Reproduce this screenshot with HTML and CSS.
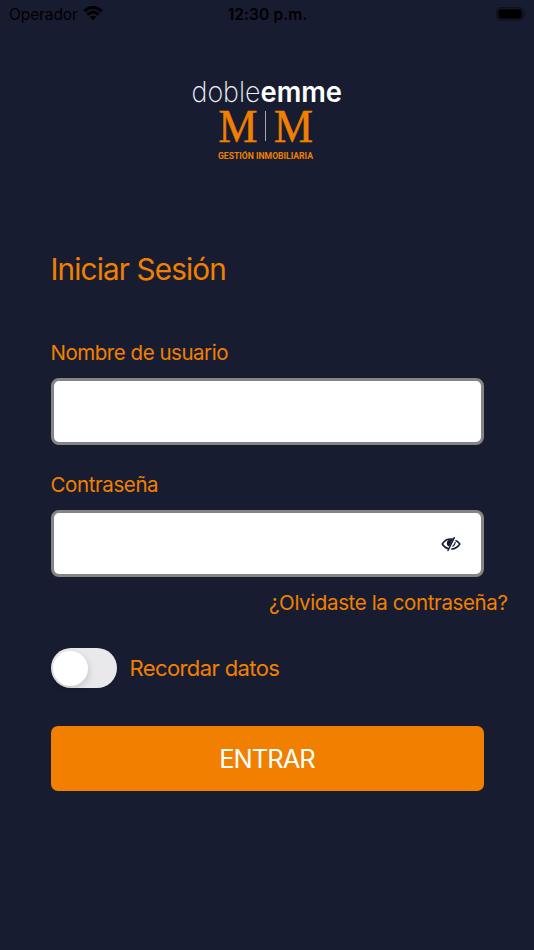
FILE: index.html
```html
<!DOCTYPE html>
<html lang="es">
<head>
<meta charset="utf-8">
<title>Iniciar Sesión</title>
<link rel="stylesheet" href="styles.css">
</head>
<body>
<header class="status">
  <div class="carrier"><span>Operador</span>
    <svg width="20" height="15" viewBox="0 0 20 15" fill="none" stroke="#000" stroke-width="3.2"><path d="M1.2 5.2Q10-2.4 18.8 5.2M4.3 8.6Q10 3.8 15.7 8.6"/><path d="M10 14.3 6.7 11Q10 8.4 13.3 11Z" fill="#000" stroke="none"/></svg>
  </div>
  <span class="time">12:30 p.m.</span>
  <svg class="battery" width="31" height="14" viewBox="0 0 31 14"><rect x=".7" y=".7" width="26.6" height="12.6" rx="4" fill="none" stroke="#0e111f" stroke-width="1.4"/><rect x="2.3" y="2.3" width="23.4" height="9.4" rx="2.3"/><path d="M28.6 4.8q2.5 2.2 0 4.5z" fill="#0e111f"/></svg>
</header>
<svg class="logo" width="150" height="84" viewBox="0 0 150 84">
  <text class="thin" x="-.5" y="23.5" textLength="69" lengthAdjust="spacingAndGlyphs">doble</text>
  <text class="heavy" x="68.5" y="23.5" textLength="81.5" lengthAdjust="spacingAndGlyphs">emme</text>
  <text class="mm" x="26.5" y="63.5" textLength="39" lengthAdjust="spacingAndGlyphs">M</text>
  <path d="M73.5 33v30" stroke="#a6a8b2" stroke-width="1"/>
  <text class="mm" x="82" y="63.5" textLength="39" lengthAdjust="spacingAndGlyphs">M</text>
  <text class="tagline" x="26" y="81" textLength="95" lengthAdjust="spacingAndGlyphs">GESTIÓN INMOBILIARIA</text>
</svg>
<main>
  <h1>Iniciar Sesión</h1>
  <label class="user-label" for="user">Nombre de usuario</label>
  <input id="user" class="field" type="text">
  <label class="pass-label" for="pass">Contraseña</label>
  <div class="field password">
    <input id="pass" type="password">
    <svg width="20" height="16" viewBox="0 0 20 16" fill="none" stroke="#181c30" stroke-width="1.5" stroke-linecap="round" stroke-linejoin="round"><path d="M7.7 12.9C4.9 12.1 2.5 10.2 1.2 8 3.2 4.7 6.3 2.9 9.8 2.9q1 0 1.8.2M15 4.6C16.6 5.5 17.9 6.7 18.8 8c-1.9 3-4.6 4.8-8 5.1M13.3 1.7 7 14.5"/><path d="M6.5 7.5c0-2 1.5-3.4 4-3.5L7.9 9.7Q6.5 9 6.5 7.5Z" fill="#181c30"/><path d="M14.2 6.3Q14 9 11.8 10.2" stroke-width="1.2"/></svg>
  </div>
  <a class="forgot"><span>¿Olvidaste la contraseña?</span></a>
  <div class="remember"><span class="switch"><span class="knob"></span></span><span class="remember-text">Recordar datos</span></div>
  <button type="button"><span>ENTRAR</span></button>
</main>
</body>
</html>
```
FILE: styles.css
```css
* { box-sizing: border-box; }
body {
  margin: 0;
  min-height: 950px;
  background: #181c30;
  color: #f28000;
  font-family: Inter, "Liberation Sans", sans-serif;
  display: flex;
  flex-direction: column;
}
.status {
  display: grid;
  grid-template-columns: 1fr auto 1fr;
  align-items: center;
  height: 28px;
  padding: 0 7px 0 9px;
  color: #000;
  font-size: 15.5px;
}
.carrier { display: flex; align-items: center; gap: 5px; letter-spacing: -.1px; }
.carrier svg { margin-top: -2px; }
.time { font-weight: 600; letter-spacing: .1px; margin-left: -1px; }
.battery { justify-self: end; margin-top: -1px; }
.logo { margin: 50px 0 0 192px; overflow: visible; }
.thin, .heavy { font-family: Inter, sans-serif; fill: #fff; font-size: 28px; }
.thin { font-weight: 200; fill: #f0f0f4; }
.heavy { font-weight: 600; }
.mm { font-family: "Liberation Serif", serif; font-size: 46px; fill: #f28000; stroke: #f28000; stroke-width: .5px; }
.tagline { font-family: Roboto, sans-serif; font-weight: 700; font-size: 9px; fill: #f28000; }
main {
  display: flex;
  flex-direction: column;
  padding: 87px 50.5px 0;
}
h1 { margin: 0; font-size: 29.7px; line-height: 40px; font-weight: 400; letter-spacing: -.87px; }
label { font-size: 20.5px; line-height: 28px; }
.user-label { margin-top: 50px; letter-spacing: -.47px; }
.pass-label { margin-top: 26px; letter-spacing: -.4px; }
.field {
  width: 433px;
  height: 67px;
  margin-top: 11px;
  border: 3px solid #858585;
  border-radius: 8px;
  background: #fff;
  outline: none;
}
.password { display: flex; align-items: center; padding-right: 20px; }
.password input { flex: 1; min-width: 0; height: 100%; border: 0; outline: 0; background: transparent; }
.forgot {
  align-self: flex-end;
  margin: 12px -24px 0 0;
  font-size: 20.5px;
  line-height: 28px;
  letter-spacing: -.38px;
  white-space: nowrap;
}
.remember { display: flex; align-items: center; gap: 13px; margin-top: 31px; height: 40px; font-size: 22px; letter-spacing: -.6px; }
.switch { width: 66px; height: 40px; padding: 2.5px; border-radius: 20px; background: #e9e9eb; }
.knob { display: block; width: 35px; height: 35px; border-radius: 50%; background: #fff; box-shadow: 1px 3px 7px rgba(0,0,0,.15); }
.remember-text { padding-bottom: 1px; }
button {
  width: 433px;
  height: 65px;
  margin-top: 38px;
  padding: 0;
  border: 0;
  border-radius: 7px;
  background: #f28000;
  color: #fff;
  font: 400 25.5px Inter, sans-serif;
  letter-spacing: -1px;
}
```
